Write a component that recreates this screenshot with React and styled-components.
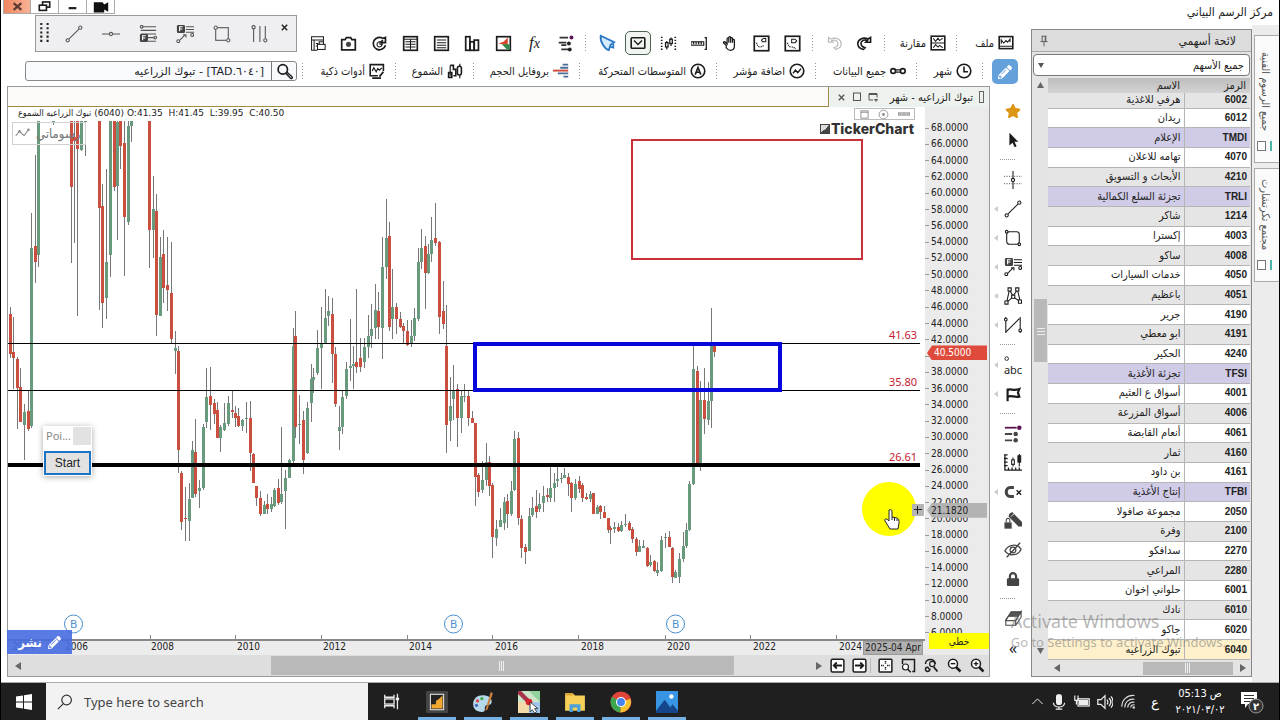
import styled, { createGlobalStyle, css } from "styled-components";
import { FaStar, FaLock, FaPencilAlt } from "react-icons/fa";

const GlobalStyle = createGlobalStyle`
  * {
    box-sizing: border-box;
  }
  body {
    margin: 0;
    background: #fff;
    font-family: "Noto Sans", "DejaVu Sans", sans-serif;
    color: #222;
    overflow: hidden;
  }
  button, input, select {
    font-family: inherit;
    color: inherit;
    padding: 0;
    margin: 0;
    border: 0;
    background: none;
  }
`;

const arabic = css`
  font-family: "DejaVu Sans Condensed", "DejaVu Sans", sans-serif;
  direction: rtl;
  white-space: nowrap;
`;

const center = css`
  display: flex;
  align-items: center;
  justify-content: center;
`;

/* ---------- icons ---------- */

const Glyph = styled.svg`
  display: block;
  flex: none;
  fill: none;
  stroke: ${(p) => p.$color || "#1c1c1c"};
  stroke-width: ${(p) => p.$stroke || 1.5};
`;

const Icon = ({ size = 18, color, stroke, children }) => (
  <Glyph width={size} height={size} viewBox="0 0 20 20" $color={color} $stroke={stroke} aria-hidden="true">
    {children}
  </Glyph>
);

const fBox = (x, y) => (
  <>
    <rect x={x} y={y} width="9" height="9" rx="1.5" fill="#444" stroke="none" />
    <path d={`M${x + 3} ${y + 7}v-5h3.5M${x + 3} ${y + 4.5}h3`} stroke="#fff" />
  </>
);

const shapes = {
  line: <><path d="M4.5 15.5L15.5 4.5" /><circle cx="3" cy="17" r="1.8" /><circle cx="17" cy="3" r="1.8" /></>,
  hline: <><path d="M0 10h8M12 10h8" /><circle cx="10" cy="10" r="1.8" /></>,
  fibo: <><path d="M4 2h15M2 6h17M2 10h17M10 14h7M10 18h9" /><circle cx="3" cy="2" r="1.5" /><circle cx="18" cy="14" r="1.5" />{fBox(1, 10)}</>,
  fiboFan: <><path d="M11 2h9M11 5h9M11 8h9M4 17l6-6M8 11h3v3" />{fBox(1, 0)}<circle cx="2.5" cy="18" r="1.6" /><circle cx="18" cy="11" r="1.6" /></>,
  square: <><rect x="3" y="3" width="14" height="14" /><circle cx="3" cy="3" r="1.8" fill="#fff" /><circle cx="17" cy="17" r="1.8" fill="#fff" /></>,
  round: <><rect x="3" y="3" width="14" height="14" rx="3" /><circle cx="3" cy="3" r="1.5" fill="#fff" /><circle cx="17" cy="17" r="1.5" fill="#fff" /></>,
  bars: <><path d="M4 4v15M11 1v18M17 1v14" /><circle cx="4" cy="2.5" r="1.8" /><circle cx="17" cy="17" r="1.8" /></>,
  grip: <path d="M6 0v20M12 0v20" strokeWidth="2" strokeDasharray="2 2" stroke="#222" />,
  printer: <><path d="M10 18H3V2h14v6M3 6h14M6 6v12M8 10h3M8 13h2" /><rect x="10" y="11" width="9" height="6" fill="#fff" /><path d="M12 11V8h5v3" /></>,
  camera: <><path d="M2 5.5h4l1.5-2.5h5L14 5.5h4v12H2z" strokeWidth="2" /><circle cx="10" cy="11" r="3" fill="#444" stroke="none" /></>,
  swirl: <><path d="M17 12a7.3 7.3 0 1 1-3-8l3-1v6h-6l3-3" strokeWidth="2" /><circle cx="10" cy="11" r="3" /><path d="M10 11h4" /></>,
  table: <><rect x="2" y="2" width="16" height="16" strokeWidth="2" /><path d="M2 5h16M4 8h12M4 11h12M4 14h12M10 5v12" /></>,
  list: <><rect x="2" y="2" width="16" height="16" strokeWidth="2" /><path d="M4.500 6h11M4.500 9h11M4.500 12h11M4.500 15h11" /></>,
  cols: <><rect x="2" y="2" width="5" height="16" strokeWidth="2" /><rect x="7" y="8" width="5" height="10" strokeWidth="2" /><rect x="12" y="6" width="5" height="12" strokeWidth="2" /></>,
  heat: <><rect x="2" y="2" width="16" height="16" strokeWidth="2" /><path d="M4 10l6-2 5-5v9z" fill="#d8452e" stroke="none" /><path d="M8 11h9v6h-3z" fill="#2f8a4a" stroke="none" /></>,
  rows: <><path d="M3 3h10M2 9h9M5 12h6M5 17h8" strokeWidth="2" stroke="#333" /><circle cx="17" cy="3" r="2.3" fill="#5b1451" stroke="none" /><circle cx="14" cy="10" r="2.3" fill="#222" stroke="none" /><circle cx="15" cy="17" r="2.3" fill="#222" stroke="none" /></>,
  railRows: <><path d="M1 3h13" strokeWidth="2" stroke="#5b1451" /><path d="M1 10h8M1 17h8" strokeWidth="2" stroke="#444" /><circle cx="17" cy="3" r="2.5" fill="#5b1451" stroke="none" /><circle cx="13" cy="10" r="2.500" fill="#444" stroke="none" /><circle cx="13" cy="17" r="2.500" fill="#444" stroke="none" /></>,
  bell: <><path d="M3 2l15 7-4 3-2 6C8 17 2 9 3 2z" fill="#d4ebfb" strokeWidth="2" /><path d="M13 14l4 1v-4" strokeWidth="2" /></>,
  mail: <><rect x="1.500" y="3.500" width="17" height="13" rx="1" strokeWidth="2" /><path d="M5 7l5 5 5-5" strokeWidth="1.700" /></>,
  range: <><path d="M2 2v17M18 2v17" strokeDasharray="1.500 2" strokeWidth="2" /><path d="M8 7v10M13 3v10" /><rect x="6.500" y="9" width="3" height="5" fill="#fff" /><rect x="11.500" y="5" width="3" height="5" fill="#fff" /></>,
  ruler: <><rect x="0" y="8" width="15" height="4" strokeWidth="1.300" /><path d="M3 8v3M6 8v3M9 8v3M12 8v3" /><path d="M16 3h2v14h-2" /></>,
  hand: <path d="M5 12L2 9.500c-1-1.500 1-2 2-1l2 2V4.500c0-1.500 2-1.500 2 0V3c0-1.600 2.200-1.600 2.200 0v1c.2-1.400 2.200-1.200 2.200.3V6c.3-1.200 2.200-1 2.200.4V13c0 3-2 5-4.600 5-2.500 0-4-1.500-5-3zM8 4.500V9M10.200 4V9M12.400 5V9" />,
  panBox: <><rect x="1.500" y="1.500" width="17" height="17" strokeWidth="2" /><path d="M4 9c1 2 1 5 4 5s4-2 5-1" strokeDasharray="1.500 1" strokeWidth="1.300" /><path d="M10 6l2-2h3v4h-4z" strokeWidth="1.200" /></>,
  panBox2: <><rect x="1.500" y="1.500" width="17" height="17" strokeWidth="2" /><path d="M4 9c1 2 1 5 4 5s4 1 6 2" strokeDasharray="1.500 1" strokeWidth="1.300" /><path d="M9 5h4l2 2-2 2H9z" strokeWidth="1.200" /></>,
  undo: <path d="M3 3v6h6L7 7c5-2 8 1 8 4 0 2-2 4-5 5l2 2c5-1 7-4 7-7 0-5-6-9-13-6z" />,
  redo: <path d="M17 3v6h-6l2-2c-5-2-8 1-8 4 0 2 2 4 5 5l-2 2c-5-1-7-4-7-7 0-5 6-9 13-6z" strokeWidth="2" />,
  compare: <><rect x="1.500" y="1.500" width="17" height="17" strokeWidth="2" /><path d="M2 10h16M4 4l3 4 3-4 2 3 4-3M4 16l3-4 3 3 2-2 4 3" strokeWidth="1.300" /></>,
  file: <><rect x="1.500" y="2" width="17" height="15" strokeWidth="2" /><path d="M2 14h16M4 11V6l3 4 3-3 2 2 3-4v4" strokeWidth="1.300" /></>,
  clock: <><circle cx="10" cy="10" r="8.500" strokeWidth="2" /><path d="M10 4.500V11h5" strokeWidth="2" /></>,
  link: <><circle cx="4" cy="10" r="3" strokeWidth="2" /><circle cx="16" cy="10" r="3" strokeWidth="2" /><path d="M6 8.500h8M6 11.500h8" /></>,
  trend: <><circle cx="10" cy="10" r="8.500" strokeWidth="2" /><path d="M5 13l3-4 3 3 4-5" strokeWidth="1.800" /></>,
  average: <><circle cx="10" cy="10" r="8.500" strokeWidth="2" /><path d="M6.500 14.500L10 5.500l3.500 9M7.800 11.500h4.500" strokeWidth="2" /></>,
  profile: <><path d="M12 2h7M9 6h10M6 13h13M13 17h6" stroke="#4b6d99" strokeWidth="2.400" /><path d="M0 9.500h19" stroke="#cf4a3a" strokeWidth="2.400" /></>,
  candles: <><path d="M4 3v13M16 1v3M16 15v4" /><path d="M2 12h4v6H2zM4 3h4v5h3v8H8" strokeWidth="2" /><rect x="13" y="4" width="5" height="11" rx="2.500" strokeWidth="2" /></>,
  smart: <><path d="M18 10V2H1.500v14H11" strokeWidth="2" /><path d="M4 10l2-4 3 5 2-4 2 2 3-3" /><path d="M13 17l5-6M4 19h11" strokeWidth="2.200" /></>,
  search: <><circle cx="8" cy="7.500" r="5.500" strokeWidth="2" /><path d="M11.500 12l5.500 6c1.500 1.300 3-.8 1.500-2L13 11" strokeWidth="1.600" /></>,
  cursor: <path d="M6 2v14l3.500-3 2.300 5 2.200-1-2.300-5H16z" fill="#1c1c1c" stroke="none" />,
  cross: <><path d="M10 0v8M10 12v8" /><path d="M0 6h20M0 14h20" strokeDasharray="1.200 1.600" stroke="#777" /><circle cx="10" cy="10" r="1.800" /></>,
  pattern: <><path d="M3 17L6 3l4 7 5-7 3 13M3 17l7-6 8 5" /><path d="M1 15.500h3.500V19H1zM4.500 1H8v3.500H4.500zM13 1h3.500v3.500H13zM16 14.500h3.500V18H16zM8.500 9H12v3.500H8.500z" fill="#fff" strokeWidth="1.200" /></>,
  nshape: <><path d="M2 1v18M18 1v18M2 18L17 3" strokeWidth="1.200" /><circle cx="2" cy="4" r="1.500" fill="#fff" /><circle cx="18" cy="16" r="1.500" fill="#fff" /></>,
  flag: <><path d="M4 4v14" strokeWidth="2.400" /><path d="M4 5.500c4-2 6 1.500 13-1l-1.500 4 1.500 4.500c-6 1-9-2-13 0" strokeWidth="2.400" /></>,
  gauge: <><path d="M0 1h4M0 5h4M0 9h4M0 13h4M1 1v17h19M5 18v-3M9 18v-3M13 18v-3M17 18v-3" strokeWidth="1.400" /><path d="M10 4v10M17 0v14" /><rect x="8.500" y="6.500" width="3" height="5" fill="#fff" /><rect x="15.500" y="2" width="3" height="7" fill="#222" /></>,
  magnet: <><path d="M11 5H7c-6 0-6 10 0 10h4" strokeWidth="3.400" stroke="#444" /><path d="M14 8l5 5M19 8l-5 5" strokeWidth="1.500" /></>,
  penLock: <><path d="M6 2l3-2 11 11v5h-4L5 5z" fill="#444" stroke="none" /><path d="M8 5l3-3" stroke="#fff" strokeWidth="1" /><rect x="0" y="11" width="9" height="8" fill="#444" stroke="#fff" strokeWidth="1" /><path d="M2.500 11V9c0-2.500 4-2.500 4 0v2" stroke="#444" /></>,
  eyeOff: <><path d="M1 11c4-8 14-8 18-2-3 8-14 8-18 2z" strokeWidth="1.400" stroke="#444" /><circle cx="10" cy="10" r="3.200" strokeWidth="1.300" stroke="#444" /><path d="M3 18L18 2" strokeWidth="1.500" stroke="#444" /></>,
  eraser: <><path d="M8 2h11l-6 9H2z" fill="#555" stroke="#444" /><path d="M5 7h11l-3 5H2z" fill="#fff" stroke="#444" /><path d="M2 12h11v5H2zM13 12l6-10v6l-6 9" fill="#fff" stroke="#444" /></>,
  abc: <circle cx="6" cy="8" r="4" />,
  boxLeft: <><rect x="1.500" y="1.500" width="17" height="17" rx="2" strokeWidth="2" fill="#fff" /><path d="M16 10H6M9 6l-4 4 4 4" strokeWidth="2.400" /></>,
  boxRight: <><rect x="1.500" y="1.500" width="17" height="17" rx="2" strokeWidth="2" fill="#fff" /><path d="M4 10h10M11 6l4 4-4 4" strokeWidth="2.400" /></>,
  boxCross: <><rect x="1.500" y="1.500" width="17" height="17" rx="1" strokeWidth="2" fill="#fff" /><path d="M10 4v4M10 12v4M4 10h4M12 10h4" strokeWidth="2" strokeDasharray="2 1" /></>,
  boxZoom: <><path d="M2 8V2h16v16h-3" strokeWidth="2" /><circle cx="6" cy="12" r="4" fill="#fff" /><path d="M9 15l4 4" strokeWidth="2" /></>,
  zoomReset: <><path d="M2 8c0-8 13-8 13 0M8 14c0 5-6 5-6 1s5-3 4 0" strokeWidth="2" /><circle cx="11" cy="8" r="3.500" /><path d="M13 12l5 6" strokeWidth="2.500" /></>,
  zoomOut: <><circle cx="8" cy="7.500" r="6" strokeWidth="2" fill="#fff" /><path d="M5 7.500h6" strokeWidth="2" /><path d="M12 12l6 6" strokeWidth="3.400" /></>,
  zoomIn: <><circle cx="8" cy="7.500" r="6" strokeWidth="2" fill="#fff" /><path d="M5 7.500h6M8 4.500v6" strokeWidth="1.800" /><path d="M12 12l6 6" strokeWidth="3.400" /></>,
};

const Shape = ({ name, ...rest }) => <Icon {...rest}>{shapes[name]}</Icon>;

/* ---------- page ---------- */

const Page = styled.div`
  display: flex;
  flex-direction: column;
  height: 100vh;
  position: relative;
  border-left: 1px solid #000;
  border-right: 1px solid #000;
`;

const TitleBar = styled.header`
  display: flex;
  justify-content: space-between;
  height: 25px;
  padding-left: 2px;
`;

const WindowButtons = styled.div`
  display: flex;
  height: 14px;
`;

const WindowButton = styled.button`
  ${center}
  width: 28px;
  border: 1px solid #aaa;
  border-top: 0;
  border-left-width: ${(p) => (p.$close ? "1px" : "0")};
  background: ${(p) => (p.$close ? "linear-gradient(to right, #f08660, #f8b296)" : "#fff")};
`;

const AppTitle = styled.h1`
  ${arabic}
  margin: 0;
  padding: 3px 6px 0 0;
  font-size: 12px;
  font-weight: 400;
  line-height: 18px;
`;

const Main = styled.main`
  flex: 1;
  min-height: 0;
  display: flex;
`;

const Workspace = styled.div`
  flex: 1;
  min-width: 0;
  display: flex;
  flex-direction: column;
`;

const TopTools = styled.div`
  display: flex;
  justify-content: flex-end;
  align-items: center;
  height: 33px;
  padding: 3px 15px 0 0;
`;

const ToolButton = styled.button`
  ${center}
  flex: none;
  width: ${(p) => p.$width || 31}px;
  height: 26px;
`;

const MailFrame = styled.span`
  ${center}
  width: 26px;
  height: 24px;
  border: 1px solid #4a6350;
  border-radius: 5px;
  background: #f1f5f0;
`;

const Separator = styled.span`
  flex: none;
  width: 10px;
  height: 16px;
  background: repeating-linear-gradient(#999 0 1px, transparent 1px 3px) 4px 0 / 1px 100% no-repeat;
`;

const TextTool = styled.button`
  ${arabic}
  flex: none;
  display: flex;
  align-items: center;
  gap: 4px;
  width: ${(p) => p.$width}px;
  padding-right: ${(p) => (p.$width === 54 ? 2 : 6)}px;
  font-size: 11px;
`;

const Fx = styled.i`
  font: italic 17px "Liberation Serif", serif;
`;

const Middle = styled.div`
  flex: 1;
  min-height: 0;
  display: flex;
`;

const ChartColumn = styled.div`
  flex: 1;
  min-width: 0;
  display: flex;
  flex-direction: column;
  padding: 0 1px 5px 6px;
`;

const ChartTools = styled.div`
  display: flex;
  align-items: center;
  height: 28px;
  padding: 0 2px 2px 18px;
`;

const SearchBox = styled.div`
  flex: 1;
  min-width: 0;
  display: flex;
  height: 20px;
  margin-right: 1px;
  border: 1px solid #888;
  border-radius: 3px;
  background: #f9fafe;
`;

const SearchInput = styled.input`
  flex: 1;
  min-width: 0;
  padding-right: 7px;
  font: 11px "DejaVu Sans", sans-serif;
  text-align: right;
`;

const SearchButton = styled.button`
  ${center}
  width: 25px;
  border-left: 1px solid #777;
`;

/* ---------- chart window ---------- */

// holds the publish button over the corner where plot and time axis meet
const ChartStack = styled.div`
  position: relative;
  flex: 1;
  min-height: 0;
  display: flex;
`;

const ChartWindow = styled.section`
  flex: 1;
  min-width: 0;
  min-height: 0;
  display: flex;
  flex-direction: column;
  border: 1px solid #999;
`;

const TabStrip = styled.div`
  display: flex;
  height: 20px;
`;

const TabFiller = styled.div`
  flex: 1;
  background: #fbfaf6;
  border-bottom: 1px solid #a08a4a;
  border-right: 1px solid #a08a4a;
`;

const ChartTab = styled.div`
  ${arabic}
  display: flex;
  align-items: center;
  gap: 6px;
  width: 160px;
  padding: 0 5px 0 7px;
  background: #eef2ee;
  font-size: 11px;
`;

const TabHandle = styled.span`
  width: 5px;
  height: 12px;
  border: 1px solid #666;
`;

const TabButton = styled.button`
  ${center}
  width: 10px;
  height: 12px;
`;

const TabTitle = styled.span`
  flex: 1;
`;

const ChartBody = styled.div`
  flex: 1;
  min-height: 0;
  display: flex;
`;

const PlotColumn = styled.div`
  flex: 1;
  min-width: 0;
  display: flex;
  flex-direction: column;
`;

const Plot = styled.div`
  flex: 1;
  min-height: 0;
  position: relative;
  overflow: hidden;
`;

const PlotSvg = styled.svg`
  position: absolute;
  inset: 0;
  width: 100%;
  height: 100%;
`;

const Quote = styled.div`
  position: absolute;
  top: 0;
  left: 10px;
  font: 9px/13px "DejaVu Sans", sans-serif;
  white-space: pre;
`;

const QuoteName = styled.bdi`
  font-family: "DejaVu Sans Condensed", "DejaVu Sans", sans-serif;
`;

const MiniTools = styled.div`
  position: absolute;
  top: 1px;
  right: 10px;
  display: flex;
  align-items: center;
  justify-content: space-around;
  width: 61px;
  height: 12px;
  border: 1px solid #bbb;
`;

const Brand = styled.div`
  position: absolute;
  top: 14px;
  right: 11px;
  display: flex;
  align-items: center;
  gap: 1px;
  font: 800 14px/16px Inter, sans-serif;
  color: #333;
`;

const DrawingsButton = styled.button`
  ${arabic}
  position: absolute;
  left: 4px;
  top: 15px;
  display: flex;
  align-items: center;
  justify-content: flex-end;
  gap: 6px;
  width: 74px;
  height: 23px;
  padding: 0 0 0 2px;
  border: 1px solid #d0d0d0;
  color: #777;
  font-size: 13px;
`;

const PublishButton = styled.button`
  ${arabic}
  ${center}
  position: absolute;
  left: 0;
  bottom: 23px;
  gap: 6px;
  direction: ltr;
  width: 65px;
  height: 24px;
  background: rgba(72, 108, 224, 0.9);
  color: #fff;
  font-size: 13px;
  font-weight: 700;
`;

const PointerBox = styled.div`
  position: absolute;
  left: 35px;
  top: 319px;
  width: 49px;
  height: 50px;
  padding: 1px;
  background: #fff;
  box-shadow: 0 1px 6px rgba(0, 0, 0, 0.35);
`;

const PointerTitle = styled.div`
  display: flex;
  justify-content: space-between;
  align-items: flex-start;
  height: 24px;
  padding-left: 2px;
  color: #888;
  font-size: 11px;
  line-height: 18px;
`;

const PointerClose = styled.button`
  width: 18px;
  height: 18px;
  background: #e2e2e2;
`;

const StartButton = styled.button`
  display: block;
  width: 100%;
  height: 24px;
  border: 2px solid #1a74c4;
  background: #e2e2e2;
  font: 12px "Liberation Sans", sans-serif;
`;

const PriceAxis = styled.div`
  position: relative;
  width: 64px;
  padding: 13px 0 14px;
  background: #ebebeb;
  overflow: hidden;
`;

const PriceList = styled.div`
  height: 100%;
  display: grid;
  grid-template-rows: repeat(32, minmax(0, 1fr));
`;

const PriceLabel = styled.span`
  display: flex;
  align-items: center;
  gap: 2px;
  font: 10px/12px "DejaVu Sans Condensed", "Noto Sans", sans-serif;
  &::before {
    content: "";
    width: 4px;
    border-top: 1px solid #999;
  }
`;

const PriceTag = styled.span`
  position: absolute;
  left: 2px;
  top: ${(p) => p.$top}%;
  width: 60px;
  padding-left: ${(p) => (p.$hot ? 7 : 4)}px;
  background: ${(p) => (p.$hot ? "#de4b3c" : "#b3b3b3")};
  color: ${(p) => (p.$hot ? "#fff" : "#222")};
  clip-path: polygon(0 50%, 5px 0, 100% 0, 100% 100%, 5px 100%);
  font: 10px/15px "DejaVu Sans Condensed", "Noto Sans", sans-serif;
`;

const ScaleButton = styled.button`
  ${arabic}
  position: absolute;
  right: 0;
  bottom: 6px;
  width: 60px;
  height: 16px;
  background: #ff0;
  font-size: 10px;
`;

const TimeAxis = styled.div`
  position: relative;
  display: flex;
  flex: none;
  height: 16px;
  overflow: hidden;
  border-top: 2px solid #888;
  background: #ececec;
`;

const Year = styled.span`
  flex: none;
  width: ${(p) => (p.$first ? 56 : 86)}px;
  padding-left: ${(p) => (p.$first ? 4 : 1)}px;
  font: 10px/12px "DejaVu Sans Condensed", "Noto Sans", sans-serif;
`;

const DateTag = styled.span`
  position: absolute;
  right: 2px;
  top: 0;
  width: 60px;
  height: 14px;
  background: #b0b0b0;
  border: 1px solid #999;
  font: 10px/12px "DejaVu Sans Condensed", "Noto Sans", sans-serif;
  text-align: center;
  white-space: nowrap;
`;

const ScrollRow = styled.div`
  display: flex;
  align-items: center;
  height: 21px;
  background: #dedede;
`;

const ScrollArrow = styled.button`
  ${center}
  flex: none;
  width: ${(p) => p.$width || 14}px;
  height: 14px;
`;

const Track = styled.div`
  flex: 1;
  height: 19px;
`;

const Thumb = styled.div`
  ${center}
  width: ${(p) => p.$size}%;
  height: 100%;
  margin-left: ${(p) => p.$start}%;
  background: #b9b9b9;
`;

const Divider = styled.span`
  width: 4px;
  height: 15px;
  border-left: 1px solid #bbb;
`;

/* ---------- drawing rail ---------- */

const Rail = styled.nav`
  display: flex;
  flex-direction: column;
  width: 40px;
`;

const EditButton = styled.button`
  ${center}
  flex: none;
  width: 26px;
  height: 25px;
  margin: 1px 0 12px 1px;
  border-radius: 5px;
  background: #64a0da;
`;

const RailButton = styled.button`
  display: flex;
  align-items: center;
  gap: 2px;
  flex: none;
  height: 29px;
  padding-left: 3px;
`;

const RailIcon = styled.span`
  ${center}
  width: 20px;
  font-size: ${(p) => (p.$large ? 16 : 12)}px;
  line-height: 12px;
`;

const TextMark = styled.span`
  display: flex;
  flex-direction: column;
  font: 11px/11px "Noto Sans", sans-serif;
`;

const RailBreak = styled.span`
  flex: none;
  width: 16px;
  height: 11px;
  margin-left: 9px;
  background: repeating-linear-gradient(to right, #999 0 1px, transparent 1px 2px) 0 5px / 100% 1px no-repeat;
`;

/* ---------- watch list ---------- */

const WatchPanel = styled.aside`
  display: flex;
  flex-direction: column;
  width: 221px;
  margin: 4px 0 5px;
  border: 1px solid #888;
  background: #e4e4e4;
`;

const WatchHeader = styled.div`
  display: flex;
  justify-content: space-between;
  align-items: center;
  height: 22px;
  padding: 0 15px 0 5px;
  background: #dcdcdc;
  border-bottom: 1px solid #aaa;
`;

const WatchTitle = styled.h2`
  ${arabic}
  margin: 0;
  font-size: 12px;
  font-weight: 400;
`;

const PinButton = styled.button`
  ${center}
  width: 14px;
  height: 16px;
`;

const SelectWrap = styled.div`
  position: relative;
  margin: 2px 1px;
`;

const ListSelect = styled.select`
  ${arabic}
  display: block;
  appearance: none;
  width: 100%;
  height: 22px;
  padding-right: 5px;
  border: 1px solid #777;
  border-radius: 4px;
  background: #fff;
  font-size: 11px;
`;

const SelectArrow = styled.span`
  position: absolute;
  left: 5px;
  top: 9px;
  border: 3px solid transparent;
  border-top: 5px solid #555;
  pointer-events: none;
`;

const WatchBody = styled.div`
  flex: 1;
  min-height: 0;
  display: flex;
  padding: 0 1px;
`;

const VScroll = styled.div`
  display: flex;
  flex-direction: column;
  align-items: center;
  width: 15px;
  padding-bottom: 2px;
`;

const VTrack = styled.div`
  flex: 1;
  width: 13px;
  display: grid;
  grid-template-rows: 75fr 23fr 102fr;
`;

const VThumb = styled.div`
  ${center}
  grid-row: 2;
  background: #b9b9b9;
`;

const StockTable = styled.table`
  flex: 1;
  height: 100%;
  border-collapse: collapse;
  table-layout: fixed;
  direction: rtl;
`;

const HeadCell = styled.th`
  ${arabic}
  width: ${(p) => p.$width || "auto"};
  height: 15px;
  padding: 0 4px;
  overflow: hidden;
  background: linear-gradient(#bdbdbd, #d3d3d3);
  font-size: 11px;
  font-weight: 400;
  line-height: 14px;
  text-align: right;
`;

const rowColor = (p) => {
  if (p.$kind === "sector") return "#d0cbe6";
  if (p.$kind === "picked") return "#fdf0cb";
  return p.$odd ? "#fff" : "#e5e5e5";
};

const StockRow = styled.tr`
  height: ${(p) => (p.$cut ? 14 : 19)}px;
  background: ${rowColor};
  border-bottom: 1px solid #b5b5b5;
`;

const CodeCell = styled.td`
  padding: 0 3px;
  border-left: 1px solid #b5b5b5;
  direction: ltr;
  font: bold 10px/14px "Liberation Sans", sans-serif;
  text-align: right;
`;

const NameCell = styled.td`
  ${arabic}
  padding: 0 3px;
  font-size: 11px;
  line-height: 14px;
  text-align: right;
`;

const HScroll = styled.div`
  display: flex;
  align-items: center;
  height: 16px;
  padding-left: 18px;
`;

const HTrack = styled.div`
  flex: 1;
  height: 13px;
`;

/* ---------- side tabs ---------- */

const SideTabs = styled.div`
  width: 27px;
  padding: 10px 0 0 2px;
  background: #ececec;
`;

const SideTab = styled.button`
  ${arabic}
  display: flex;
  align-items: center;
  gap: 10px;
  writing-mode: vertical-rl;
  width: 25px;
  height: ${(p) => p.$height}px;
  margin-bottom: 5px;
  padding: 10px 4px 11px 0;
  border: 1px solid #aaa;
  border-right: 0;
  background: #fafafa;
  color: #555;
  font-size: 11px;
`;

const TabMarkSvg = styled.svg`
  flex: none;
  width: 16px;
  height: 10px;
`;

/* ---------- floating palette and watermark ---------- */

const Palette = styled.div`
  position: absolute;
  left: 34px;
  top: 15px;
  display: flex;
  align-items: center;
  width: 262px;
  height: 37px;
  border: 1px solid #999;
  background: #efeff1;
`;

const PaletteButton = styled.button`
  ${center}
  width: 37px;
  height: 100%;
`;

const PaletteClose = styled.button`
  ${center}
  align-self: flex-start;
  width: 15px;
  height: 22px;
`;

const Watermark = styled.div`
  position: absolute;
  right: 53px;
  bottom: 69px;
  color: rgba(110, 110, 110, 0.5);
  font-size: 13px;
  line-height: 18px;
  white-space: nowrap;
  pointer-events: none;
`;

const WatermarkTitle = styled.div`
  font-size: 18px;
  line-height: 24px;
`;

/* ---------- taskbar ---------- */

const Taskbar = styled.footer`
  display: flex;
  flex: none;
  height: 38px;
  border-top: 1px solid #aaa;
  background: #1f1f20;
  color: #fff;
`;

const TaskButton = styled.button`
  ${center}
  width: ${(p) => p.$width || 46}px;
`;

const TaskSearch = styled.label`
  display: flex;
  align-items: center;
  gap: 11px;
  width: 322px;
  padding-left: 11px;
  background: #f2f2f2;
`;

const TaskInput = styled.input`
  flex: 1;
  font-size: 13px;
  color: #222;
  &::placeholder {
    color: #444;
    opacity: 1;
  }
`;

const AppButton = styled.button`
  ${center}
  width: 46px;
  position: relative;
  &::after {
    content: "";
    position: absolute;
    left: 4px;
    right: 4px;
    bottom: 0;
    height: 3px;
    background: #76b0e4;
  }
`;

const Tray = styled.div`
  display: flex;
  margin-left: auto;
  padding-right: 6px;
`;

const Clock = styled.div`
  width: 62px;
  padding-top: 3px;
  font: 11px/16px "DejaVu Sans Condensed", "DejaVu Sans", sans-serif;
  text-align: center;
`;

/* ---------- data ---------- */

// x, high, body top, body bottom, low, up (1) or down (0)
const candles = [
  [10, 307, 314, 354, 358, 0], [13, 317, 352, 358, 389, 0], [17, 357, 359, 388, 429, 0], [20, 368, 387, 422, 422, 0],
  [24, 404, 412, 425, 460, 1], [28, 391, 411, 429, 431, 0], [31, 213, 248, 426, 428, 1], [35, 155, 246, 262, 283, 0],
  [38, 121, 121, 255, 267, 1], [53, 121, 121, 121, 125, 1], [71, 121, 121, 187, 263, 0], [74, 121, 137, 141, 243, 0],
  [77, 121, 121, 149, 316, 0], [81, 121, 121, 150, 151, 1], [85, 121, 121, 122, 156, 1], [99, 121, 121, 208, 310, 0],
  [102, 184, 206, 303, 328, 0], [106, 169, 262, 298, 319, 1], [110, 121, 121, 255, 277, 1], [114, 121, 121, 187, 191, 0],
  [117, 121, 122, 186, 240, 1], [120, 121, 121, 146, 169, 0], [124, 121, 143, 217, 276, 0], [128, 121, 126, 222, 225, 1],
  [131, 121, 121, 126, 142, 1], [149, 121, 121, 230, 268, 0], [153, 176, 209, 230, 258, 1], [156, 194, 211, 315, 336, 0],
  [160, 237, 257, 316, 316, 1], [163, 230, 254, 288, 303, 0], [167, 237, 285, 290, 311, 0], [171, 242, 293, 339, 343, 0],
  [175, 331, 348, 351, 374, 1], [178, 346, 351, 450, 473, 0], [181, 471, 473, 522, 530, 0], [185, 487, 518, 519, 541, 0],
  [189, 483, 499, 521, 541, 1], [192, 441, 450, 498, 498, 1], [195, 419, 452, 494, 497, 0], [199, 480, 488, 491, 508, 1],
  [203, 424, 427, 488, 490, 1], [206, 368, 397, 422, 428, 1], [210, 367, 396, 405, 430, 0], [214, 399, 403, 414, 424, 0],
  [217, 402, 410, 438, 438, 0], [220, 425, 427, 438, 452, 1], [224, 403, 423, 430, 431, 1], [228, 396, 403, 424, 426, 1],
  [232, 390, 410, 412, 418, 0], [235, 406, 413, 418, 427, 0], [238, 408, 416, 426, 427, 0], [242, 419, 420, 426, 431, 1],
  [246, 402, 418, 419, 433, 1], [250, 401, 418, 453, 471, 0], [253, 453, 454, 483, 483, 0], [256, 486, 486, 498, 506, 0],
  [260, 491, 498, 514, 516, 0], [264, 501, 505, 514, 514, 1], [267, 494, 504, 509, 514, 0], [271, 497, 504, 509, 512, 1],
  [274, 488, 490, 506, 507, 1], [278, 479, 488, 503, 505, 0], [281, 427, 494, 502, 504, 1], [285, 470, 478, 491, 529, 1],
  [289, 459, 460, 478, 478, 1], [293, 328, 346, 461, 463, 1], [295, 311, 336, 427, 438, 0], [299, 395, 424, 425, 444, 1],
  [303, 411, 420, 460, 474, 0], [307, 402, 408, 453, 454, 1], [311, 364, 379, 403, 422, 1], [313, 368, 377, 380, 393, 1],
  [317, 330, 348, 373, 375, 1], [321, 307, 343, 348, 389, 1], [325, 289, 318, 343, 343, 1], [328, 296, 311, 316, 326, 1],
  [332, 298, 314, 354, 383, 0], [335, 347, 354, 404, 407, 0], [339, 406, 427, 431, 450, 1], [342, 390, 397, 427, 434, 1],
  [346, 362, 369, 396, 399, 1], [350, 319, 366, 368, 381, 1], [353, 346, 364, 366, 389, 1], [356, 289, 362, 367, 373, 0],
  [360, 338, 358, 367, 372, 0], [364, 338, 347, 362, 368, 1], [368, 315, 336, 347, 358, 1], [371, 304, 329, 336, 348, 1],
  [375, 284, 310, 328, 339, 1], [378, 292, 311, 327, 339, 0], [382, 237, 267, 328, 359, 1], [386, 199, 238, 267, 279, 1],
  [389, 222, 236, 327, 331, 0], [392, 269, 307, 319, 339, 1], [396, 303, 307, 319, 334, 0], [400, 312, 319, 327, 328, 0],
  [403, 323, 326, 331, 344, 0], [407, 320, 331, 345, 346, 0], [411, 320, 336, 343, 347, 1], [414, 308, 318, 336, 341, 1],
  [418, 248, 262, 319, 321, 1], [421, 229, 248, 262, 269, 1], [425, 236, 246, 273, 309, 0], [428, 244, 254, 273, 274, 1],
  [431, 217, 240, 254, 262, 1], [435, 203, 238, 243, 246, 0], [439, 241, 242, 317, 334, 0], [443, 281, 311, 324, 329, 0],
  [446, 305, 346, 425, 453, 0], [450, 377, 406, 421, 441, 1], [453, 365, 390, 399, 420, 1], [457, 384, 389, 418, 447, 0],
  [461, 391, 396, 418, 433, 1], [464, 384, 396, 397, 402, 1], [468, 390, 396, 418, 426, 0], [472, 411, 418, 423, 423, 0],
  [475, 423, 423, 477, 506, 0], [478, 473, 475, 492, 497, 0], [482, 461, 480, 490, 493, 1], [486, 443, 462, 480, 486, 1],
  [489, 456, 462, 486, 496, 0], [492, 483, 485, 537, 558, 0], [496, 520, 529, 538, 546, 1], [500, 508, 520, 527, 527, 1],
  [504, 497, 502, 523, 530, 1], [507, 494, 501, 514, 528, 0], [511, 481, 491, 514, 516, 1], [514, 431, 439, 490, 491, 1],
  [518, 432, 438, 518, 525, 0], [521, 515, 519, 548, 558, 0], [525, 544, 547, 552, 564, 0], [529, 508, 516, 551, 551, 1],
  [532, 497, 508, 515, 517, 1], [536, 490, 506, 512, 518, 0], [539, 493, 504, 509, 512, 1], [543, 486, 496, 503, 512, 1],
  [547, 488, 495, 497, 502, 0], [550, 467, 488, 498, 502, 1], [554, 473, 483, 488, 502, 1], [557, 467, 479, 481, 487, 1],
  [561, 473, 478, 479, 483, 1], [564, 468, 475, 478, 478, 1], [568, 473, 477, 484, 496, 0], [571, 482, 483, 498, 512, 0],
  [575, 479, 484, 498, 500, 1], [579, 476, 481, 489, 493, 0], [582, 483, 485, 498, 502, 0], [586, 493, 497, 499, 500, 0],
  [590, 491, 494, 499, 502, 1], [593, 493, 493, 514, 514, 0], [597, 505, 507, 514, 514, 1], [600, 505, 506, 512, 519, 0],
  [604, 506, 512, 518, 518, 0], [608, 518, 518, 530, 533, 0], [610, 526, 528, 530, 544, 0], [614, 522, 527, 529, 533, 1],
  [618, 523, 527, 531, 532, 0], [621, 521, 525, 531, 532, 1], [625, 514, 524, 525, 527, 1], [629, 521, 523, 530, 531, 0],
  [632, 527, 529, 539, 543, 0], [636, 537, 539, 552, 556, 0], [639, 540, 546, 552, 552, 1], [643, 540, 546, 548, 548, 1],
  [647, 547, 548, 566, 567, 0], [650, 555, 562, 565, 567, 1], [654, 560, 561, 571, 572, 0], [657, 562, 570, 573, 576, 1],
  [661, 536, 540, 571, 572, 1], [665, 533, 537, 538, 548, 1], [669, 531, 537, 547, 547, 0], [672, 547, 548, 577, 583, 0],
  [675, 570, 572, 578, 578, 1], [679, 553, 559, 577, 583, 1], [683, 532, 546, 559, 562, 1], [686, 523, 530, 546, 548, 1],
  [689, 481, 484, 530, 531, 1], [693, 345, 369, 484, 485, 1], [697, 366, 371, 463, 464, 0], [700, 381, 400, 463, 471, 1],
  [704, 368, 400, 419, 434, 0], [708, 382, 401, 420, 425, 1], [711, 308, 345, 401, 428, 1], [714, 345, 346, 352, 357, 0],
];

const levels = [
  { y: 343, label: "41.63", width: 1 },
  { y: 390, label: "35.80", width: 1 },
  { y: 465, label: "26.61", width: 4 },
];

// the last price tag takes the place of the 40 label
const prices = Array.from({ length: 32 }, (_, i) => 68 - i * 2);
const years = ["2004", "2006", "2008", "2010", "2012", "2014", "2016", "2018", "2020", "2022", "2024"];

const stocks = [
  ["6002", "هرفي للاغذية"],
  ["6012", "ريدان"],
  ["TMDI", "الإعلام", "sector"],
  ["4070", "تهامه للاعلان"],
  ["4210", "الأبحاث و التسويق"],
  ["TRLI", "تجزئة السلع الكمالية", "sector"],
  ["1214", "شاكر"],
  ["4003", "إكسترا"],
  ["4008", "ساكو"],
  ["4050", "خدمات السيارات"],
  ["4051", "باعظيم"],
  ["4190", "جرير"],
  ["4191", "ابو معطي"],
  ["4240", "الحكير"],
  ["TFSI", "تجزئة الأغذية", "sector"],
  ["4001", "أسواق ع العثيم"],
  ["4006", "أسواق المزرعة"],
  ["4061", "أنعام القابضة"],
  ["4160", "ثمار"],
  ["4161", "بن داود"],
  ["TFBI", "إنتاج الأغذية", "sector"],
  ["2050", "مجموعة صافولا"],
  ["2100", "وفرة"],
  ["2270", "سدافكو"],
  ["2280", "المراعي"],
  ["6001", "حلواني إخوان"],
  ["6010", "نادك"],
  ["6020", "جاكو"],
  ["6040", "تبوك الزراعيه", "picked"],
];

const chartTools = [
  ["أدوات ذكية", "smart", 83],
  ["الشموع", "candles", 68],
  ["بروفايل الحجم", "profile", 96],
  ["المتوسطات المتحركة", "average", 127],
  ["اضافة مؤشر", "trend", 89],
  ["جميع البيانات", "link", 91],
  ["شهر", "clock", 56],
];

const railItems = [
  { label: "star", icon: <FaStar size={16} color="#dc9514" /> },
  { label: "pointer", name: "cursor" },
  "break",
  { label: "crosshair", name: "cross" },
  { label: "line", name: "line", more: true },
  { label: "shape", name: "round", more: true },
  { label: "fibonacci", name: "fiboFan", more: true },
  { label: "pattern", name: "pattern", more: true },
  { label: "wave", name: "nshape", more: true },
  "break",
  { label: "text", icon: <TextMark><Shape name="abc" size={9} stroke={2} />abc</TextMark>, more: true },
  { label: "flag", name: "flag", more: true },
  "break",
  { label: "levels", name: "railRows" },
  { label: "measure", name: "gauge" },
  { label: "magnet", name: "magnet", more: true },
  { label: "lock drawing", name: "penLock" },
  { label: "hide", name: "eyeOff" },
  { label: "lock", icon: <FaLock size={14} color="#444" /> },
  "break",
  { label: "erase", name: "eraser" },
  { label: "collapse", icon: "«", large: true },
];

/* ---------- parts ---------- */

const Triangle = ({ dir, color = "#666" }) => {
  const d = { left: "M6 0v8L0 4z", right: "M0 0v8l6-4z", up: "M0 7h7L3.500 1z", down: "M0 1h7L3.500 7z", small: "M4 1v6L0 4z" }[dir];
  return (
    <svg width="7" height="8" aria-hidden="true">
      <path d={d} fill={color} />
    </svg>
  );
};

const Grip = ({ turn }) => (
  <svg width="8" height="10" aria-hidden="true">
    <path d={turn ? "M0 2.500h8M0 5.500h8M0 8.500h8" : "M1.500 0v10M3.500 0v10M5.500 0v10"} stroke="#eee" />
  </svg>
);

const TopToolbar = () => (
  <TopTools>
    {["printer", "camera", "swirl", "table", "list", "cols", "heat"].map((name) => (
      <ToolButton key={name} aria-label={name}><Shape name={name} size={17} stroke={1.2} /></ToolButton>
    ))}
    <ToolButton aria-label="function"><Fx>f<small>x</small></Fx></ToolButton>
    <ToolButton aria-label="levels"><Shape name="rows" size={17} /></ToolButton>
    <Separator />
    <ToolButton aria-label="alerts"><Shape name="bell" color="#2a78c4" /></ToolButton>
    <ToolButton aria-label="mail"><MailFrame><Shape name="mail" size={16} /></MailFrame></ToolButton>
    {["range", "ruler", "hand", "panBox", "panBox2"].map((name) => (
      <ToolButton key={name} aria-label={name}><Shape name={name} size={17} /></ToolButton>
    ))}
    <Separator />
    <ToolButton aria-label="undo"><Shape name="undo" color="#bbb" size={16} /></ToolButton>
    <ToolButton aria-label="redo"><Shape name="redo" size={16} /></ToolButton>
    <Separator />
    <TextTool $width={62}><Shape name="compare" size={16} />مقارنة</TextTool>
    <Separator />
    <TextTool $width={54}><Shape name="file" size={16} />ملف</TextTool>
  </TopTools>
);

const PlotDrawing = () => (
  <PlotSvg aria-label="chart">
    <g transform="translate(-8 -107)">
      <g shapeRendering="crispEdges">
        {candles.map(([x, high, top, bottom, low, up]) => (
          <g key={x}>
            <rect x={x} y={high} width="1" height={low - high} fill="#777" />
            <rect x={x - 1} y={top} width="3" height={Math.max(bottom - top, 1)} fill={up ? "#689a7e" : "#cb4f3e"} />
          </g>
        ))}
        {levels.map(({ y, width }) => (
          <path key={y} d={`M8 ${y + (width % 2) / 2}H920`} stroke="#000" strokeWidth={width} />
        ))}
        <rect x="632" y="140" width="230" height="119" fill="none" stroke="#c9303a" strokeWidth="2" />
        <rect x="475" y="344" width="305" height="46" fill="none" stroke="#0505dc" strokeWidth="4" />
        <path d="M150 635v4M235 635v4M321 635v4M407 635v4M492 635v4M578 635v4M665 635v4M750 635v4M836 635v4" stroke="#888" transform="translate(.5 0)" />
      </g>
      {levels.map(({ y, label }) => (
        <text key={label} x="917" y={y - 4} textAnchor="end" fontFamily="Noto Sans" fontSize="11" fill="#c5202f">{label}</text>
      ))}
      {[73, 453, 675].map((x) => (
        <g key={x}>
          <circle cx={x + 0.5} cy="624" r="9" fill="#fff" stroke="#4a90d0" />
          <text x={x + 0.5} y="628" textAnchor="middle" fontFamily="Noto Sans" fontSize="11" fill="#4a90d0">B</text>
        </g>
      ))}
      <circle cx="889" cy="509" r="27" fill="#ff0" />
      <path d="M889 510c2-1 3 0 3 2v5l5 1c2 1 2 2 2 5l-1 6h-8l-5-8c-1-2 1-3 3-1l1 1z" fill="#fff" stroke="#222" />
      <path d="M892 517v3M894.500 518v3M897 519v2" stroke="#222" />
      <rect x="912" y="504" width="12" height="12" fill="#b5b5b5" />
      <path d="M914 509.500h8M917.500 506v8" stroke="#222" />
    </g>
  </PlotSvg>
);

const Chart = () => (
  <ChartWindow>
    <TabStrip>
      <TabFiller />
      <ChartTab>
        <TabHandle />
        <TabTitle>تبوك الزراعيه - شهر</TabTitle>
        <TabButton aria-label="detach"><Icon size={10} color="#555" stroke={2}><path d="M10 16H2V3h16v8M2 5h16M13 15l3 4 3-4z" /></Icon></TabButton>
        <TabButton aria-label="maximize"><Icon size={10} color="#555" stroke={2}><rect x="3" y="2" width="14" height="15" /></Icon></TabButton>
        <TabButton aria-label="close"><Icon size={9} color="#555" stroke={3}><path d="M4 4l12 12M16 4L4 16" /></Icon></TabButton>
      </ChartTab>
    </TabStrip>
    <ChartBody>
      <PlotColumn>
        <Plot>
          <PlotDrawing />
          <Quote><QuoteName>تبوك الزراعيه الشموع</QuoteName> (6040) O:41.35  H:41.45  L:39.95  C:40.50</Quote>
          <MiniTools>
            <Icon size={9} color="#888" stroke={2}><rect x="2" y="2" width="16" height="16" /><path d="M2 5h16" /></Icon>
            <Icon size={11} color="#888"><circle cx="10" cy="10" r="8" /><circle cx="10" cy="10" r="2" fill="#888" /></Icon>
            <Icon size={12} color="#999" stroke={2}><path d="M1 8h4v4H1zM8 8h4v4H8zM15 8h4v4h-4z" /></Icon>
          </MiniTools>
          <Brand>
            <Icon size={10} color="#444" stroke={2}><rect x="1" y="1" width="18" height="18" fill="#ddd" /><path d="M2 18l5-5 4-1 7-9v15z" fill="#444" /></Icon>
            TickerChart
          </Brand>
          <DrawingsButton>
            رسوماتي
            <Icon size={15} color="#888"><path d="M1 13l5-6 6 6 6-8" /><circle cx="6" cy="7" r="1" /><circle cx="18" cy="5" r="1" /></Icon>
          </DrawingsButton>
          <PointerBox>
            <PointerTitle>Poi...<PointerClose aria-label="close" /></PointerTitle>
            <StartButton>Start</StartButton>
          </PointerBox>
        </Plot>
        <TimeAxis>
          {years.map((year, i) => <Year key={year} $first={i === 0}>{year}</Year>)}
          <DateTag>2025-04 Apr</DateTag>
        </TimeAxis>
      </PlotColumn>
      <PriceAxis>
        <PriceList>
          {prices.map((price) => <PriceLabel key={price}>{price === 40 ? "" : `${price}.0000`}</PriceLabel>)}
        </PriceList>
        <PriceTag $hot $top={43.5}>40.5000</PriceTag>
        <PriceTag $top={72.2}>21.1820</PriceTag>
        <ScaleButton>خطي</ScaleButton>
      </PriceAxis>
    </ChartBody>
    <ScrollRow>
      <ScrollArrow $width={20} aria-label="scroll left"><Triangle dir="left" /></ScrollArrow>
      <Track><Thumb $start={31} $size={59}><Grip /></Thumb></Track>
      <ScrollArrow aria-label="scroll right"><Triangle dir="right" /></ScrollArrow>
      {["boxLeft", "boxRight"].map((name) => (
        <ToolButton key={name} $width={22} aria-label={name}><Shape name={name} size={15} /></ToolButton>
      ))}
      <Divider />
      {["boxCross", "boxZoom", "zoomReset", "zoomOut", "zoomIn"].map((name) => (
        <ToolButton key={name} $width={23} aria-label={name}><Shape name={name} size={15} /></ToolButton>
      ))}
    </ScrollRow>
  </ChartWindow>
);

const DrawingRail = () => (
  <Rail>
    <EditButton aria-label="edit"><FaPencilAlt size={14} color="#fff" /></EditButton>
    {railItems.map((item, i) =>
      item === "break" ? (
        <RailBreak key={i} />
      ) : (
        <RailButton key={item.label} aria-label={item.label}>
          <Triangle dir="small" color={item.more ? "#ccc" : "transparent"} />
          <RailIcon $large={item.large}>{item.icon || <Shape name={item.name} size={18} stroke={1.2} />}</RailIcon>
        </RailButton>
      )
    )}
  </Rail>
);

const WatchList = () => (
  <WatchPanel>
    <WatchHeader>
      <PinButton aria-label="pin"><Icon size={12} color="#555"><path d="M6 2h8M7 2v9M13 2v9M12 2v9M4 11h12M10 11v8" /></Icon></PinButton>
      <WatchTitle>لائحة أسهمي</WatchTitle>
    </WatchHeader>
    <SelectWrap>
      <ListSelect aria-label="list"><option>جميع الأسهم</option></ListSelect>
      <SelectArrow />
    </SelectWrap>
    <WatchBody>
      <VScroll>
        <ScrollArrow aria-label="scroll up"><Triangle dir="up" /></ScrollArrow>
        <VTrack><VThumb><Grip turn /></VThumb></VTrack>
        <ScrollArrow aria-label="scroll down"><Triangle dir="down" /></ScrollArrow>
      </VScroll>
      <StockTable>
        <thead>
          <tr>
            <HeadCell $width="66px">الرمز</HeadCell>
            <HeadCell>الاسم</HeadCell>
          </tr>
        </thead>
        <tbody>
          {stocks.map(([code, name, kind], i) => (
            <StockRow key={code} $kind={kind} $odd={i % 2 === 1} $cut={i === 0}>
              <CodeCell>{code}</CodeCell>
              <NameCell>{name}</NameCell>
            </StockRow>
          ))}
        </tbody>
      </StockTable>
    </WatchBody>
    <HScroll>
      <ScrollArrow aria-label="scroll left"><Triangle dir="left" /></ScrollArrow>
      <HTrack><Thumb $start={46} $size={53}><Grip /></Thumb></HTrack>
      <ScrollArrow $width={16} aria-label="scroll right"><Triangle dir="right" /></ScrollArrow>
    </HScroll>
  </WatchPanel>
);

const TabMark = () => (
  <TabMarkSvg aria-hidden="true">
    <rect x=".5" y=".5" width="8" height="9" fill="#fff" stroke="#777" />
    <path d="M14 0v10" stroke="#4ab7a8" strokeWidth="2" />
  </TabMarkSvg>
);

const FloatingPalette = () => (
  <Palette>
    <ToolButton $width={19} aria-label="move"><Shape name="grip" size={21} /></ToolButton>
    {["line", "hline", "fibo", "fiboFan", "square", "bars"].map((name) => (
      <PaletteButton key={name} aria-label={name}><Shape name={name} size={18} color="#555" stroke={1.2} /></PaletteButton>
    ))}
    <PaletteClose aria-label="close palette"><Icon size={9} stroke={3}><path d="M4 4l12 12M16 4L4 16" /></Icon></PaletteClose>
  </Palette>
);

const appIcons = {
  ticker: <><rect width="20" height="20" rx="1" fill="#444" /><rect x="4" y="3" width="12" height="14" fill="#222" stroke="#ddd" /><path d="M5 16v-4h4V9l3-2 3-3v12z" fill="#f0a830" /></>,
  paint: <><path d="M1 12C1 6 6 3 12 4c6 1 7 6 5 8-2 1-4 0-5 2s1 5-3 5C4 19 1 16 1 12z" fill="#b5d8ea" /><circle cx="5" cy="9" r="1.500" fill="#d44" /><circle cx="9" cy="7" r="1.500" fill="#4a4" /><circle cx="4" cy="13" r="1.500" fill="#46b" /><path d="M17 1l2 1-5 15-2 1z" fill="#c98142" /></>,
  pointer: <><rect width="20" height="20" fill="#cde5c8" /><path d="M0 10h10v10H0z" fill="#f3dca9" /><path d="M10 10h10v10H10z" fill="#9fc5ea" /><path d="M10 0h10v10z" fill="#8fd29c" /><path d="M0 0l10 10" stroke="#a8324a" strokeWidth="4" /><circle cx="10" cy="10" r="3" fill="#d8232a" /><path d="M11 10v9l2-2 2 3 2-1-2-3h3z" fill="#fff" stroke="#222" strokeWidth=".7" /></>,
  folder: <><path d="M1 2h7l2 2h9v14H1z" fill="#f6cf58" /><path d="M1 2h7v2H1z" fill="#dba532" /><path d="M5 19v-7h10v7h-3v-4H8v4z" fill="#4aa0d8" /></>,
  chrome: <><circle cx="10" cy="10" r="9.500" fill="#e0453a" /><path d="M10 10L1.800 5.200A9.500 9.500 0 0 0 9.500 19.500z" fill="#3fa650" /><path d="M10 10l-.5 9.500A9.500 9.500 0 0 0 18.500 7z" fill="#f6c52e" /><circle cx="10" cy="10" r="4.600" fill="#fff" /><circle cx="10" cy="10" r="3.600" fill="#4584ee" /></>,
  photos: <><rect width="20" height="20" fill="#3795e4" /><path d="M0 18l8-10 5 7 2-3 5 6v2H0z" fill="#15458a" /><circle cx="14" cy="5" r="2" fill="#fff" /></>,
};

const TaskbarRow = () => (
  <Taskbar>
    <TaskButton $width={45} aria-label="start">
      <svg width="16" height="16" viewBox="0 0 16 16" fill="#fff"><path d="M0 2.500l7-1v6H0zM8 1.300L16 0v7.500H8zM0 8.500h7v6l-7-1zM8 8.500h8V16l-8-1.300z" /></svg>
    </TaskButton>
    <TaskSearch>
      <Icon size={16} color="#333"><circle cx="12" cy="7.500" r="6" /><path d="M8 12l-7 7" /></Icon>
      <TaskInput placeholder="Type here to search" aria-label="Type here to search" />
    </TaskSearch>
    <TaskButton aria-label="task view">
      <Icon size={17} color="#eee"><path d="M2 2v3h11V2M2 18v-3h11v3M17 1v18" /><rect x="2" y="7" width="11" height="6" /><path d="M15 7h4" strokeWidth="3" /></Icon>
    </TaskButton>
    {Object.keys(appIcons).map((name) => (
      <AppButton key={name} aria-label={name}><svg width="22" height="22" viewBox="0 0 20 20">{appIcons[name]}</svg></AppButton>
    ))}
    <Tray>
      <TaskButton $width={22} aria-label="more"><Icon size={13} color="#eee"><path d="M2 14l8-8 8 8" /></Icon></TaskButton>
      <TaskButton $width={22} aria-label="microphone"><Icon size={16} color="#eee"><rect x="7" y="1" width="6" height="12" rx="2" fill="#eee" /><path d="M3 11c0 7 14 7 14 0M10 16v3M6 19h8" /></Icon></TaskButton>
      <TaskButton $width={23} aria-label="battery"><Icon size={16} color="#eee"><rect x="5" y="6" width="14" height="9" /><path d="M7 8h10v5H7z" fill="#eee" /><path d="M1 4v4h4V4M3 8v5M1 2v2M5 2v2" /></Icon></TaskButton>
      <TaskButton $width={23} aria-label="volume"><Icon size={16} color="#eee"><path d="M1 7h4l5-5v16l-5-5H1zM12.500 7c1.500 2 1.500 4 0 6M15 5c3 3 3 7 0 10M17.500 3c3.500 4 3.500 10 0 14" /></Icon></TaskButton>
      <TaskButton $width={25} aria-label="network"><Icon size={15} color="#ddd"><path d="M1 17C1 8 8 1 18 2M5 18c0-7 5-12 13-11M9 18c0-5 4-8 9-7M13 18c0-3 2-4 5-3.500" /><circle cx="17" cy="18" r="1" /></Icon></TaskButton>
      <TaskButton $width={28} aria-label="language">ع</TaskButton>
      <Clock><div>05:13 ص</div><div>٢٠٢١/٠٣/٠٢</div></Clock>
      <TaskButton $width={42} aria-label="notifications">
        <svg width="24" height="24" viewBox="0 0 24 24">
          <path d="M1 2h16v12h-9l-3 4v-4H1z" fill="#fff" />
          <path d="M4 5.500h10M4 8.500h10M4 11.500h6" stroke="#333" />
          <circle cx="16" cy="16" r="7" fill="#333" stroke="#999" />
          <text x="16" y="20" textAnchor="middle" fontSize="10" fontWeight="700" fill="#fff">٢</text>
        </svg>
      </TaskButton>
    </Tray>
  </Taskbar>
);

function App() {
  return (
    <>
      <GlobalStyle />
      <Page>
        <TitleBar>
          <WindowButtons>
            <WindowButton $close aria-label="close window"><Icon size={11} stroke={4} color="#5a3a30"><path d="M3 4l14 12M17 4L3 16" /></Icon></WindowButton>
            <WindowButton aria-label="restore"><Icon size={13} stroke={2.5}><rect x="7" y="3" width="11" height="8" /><rect x="2" y="8" width="11" height="8" fill="#fff" /></Icon></WindowButton>
            <WindowButton aria-label="minimize"><Icon size={11} stroke={4}><path d="M3 13h14" /></Icon></WindowButton>
            <WindowButton aria-label="record"><Icon size={16}><path d="M1 4h11l2 3 5-3v12l-5-3v4H1z" fill="#111" stroke="none" /></Icon></WindowButton>
          </WindowButtons>
          <AppTitle>مركز الرسم البياني</AppTitle>
        </TitleBar>
        <Main>
          <Workspace>
            <TopToolbar />
            <Middle>
              <ChartColumn>
                <ChartTools>
                  <SearchBox>
                    <SearchInput aria-label="symbol" defaultValue="تبوك الزراعيه - [TAD.٦٠٤٠]" />
                    <SearchButton aria-label="search"><Shape name="search" size={17} /></SearchButton>
                  </SearchBox>
                  <Separator />
                  {chartTools.map(([label, name, width]) => [
                    <TextTool key={name} $width={width}><Shape name={name} size={16} />{label}</TextTool>,
                    <Separator key={`${name}-end`} />,
                  ])}
                </ChartTools>
                <ChartStack>
                  <Chart />
                  <PublishButton>نشر<FaPencilAlt size={13} /></PublishButton>
                </ChartStack>
              </ChartColumn>
              <DrawingRail />
            </Middle>
          </Workspace>
          <WatchList />
          <SideTabs>
            <SideTab $height={128}><TabMark />جميع الرسوم الفنية</SideTab>
            <SideTab $height={114}><TabMark />مجتمع تكرتشارت</SideTab>
          </SideTabs>
        </Main>
        <TaskbarRow />
        <FloatingPalette />
        <Watermark>
          <WatermarkTitle>Activate Windows</WatermarkTitle>
          Go to Settings to activate Windows.
        </Watermark>
      </Page>
    </>
  );
}

export default App;
